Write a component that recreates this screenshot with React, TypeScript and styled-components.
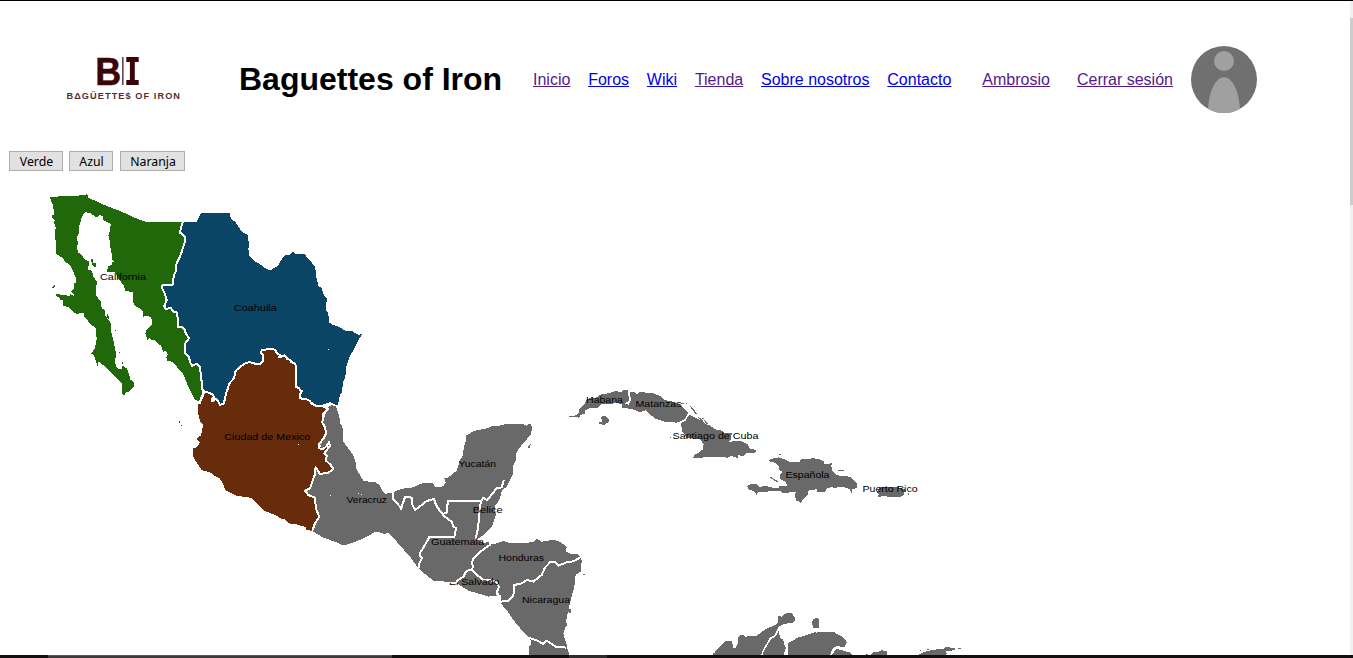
import React from 'react';
import styled, { createGlobalStyle } from 'styled-components';

const GlobalStyle = createGlobalStyle`
  * { box-sizing: border-box; }
  body { margin: 0; background: #fff; font-family: 'Liberation Sans', Arial, sans-serif; color: #000; overflow: hidden; }
`;

const Screen = styled.div`
  display: flex;
  flex-direction: column;
  width: 1353px;
  height: 658px;
  border-top: 1px solid #000;
  overflow: hidden;
`;

const Viewport = styled.div`
  display: flex;
  flex: 1;
  min-height: 0;
`;

const Page = styled.main`
  flex: 1;
  min-width: 0;
  overflow: hidden;
`;

const ScrollTrack = styled.div`
  width: 3px;
  padding-top: 17px;
  background: #f0f0f0;
`;

const ScrollThumb = styled.div`
  height: 187px;
  background: #cdcdcd;
`;

const Header = styled.header`
  display: flex;
  align-items: center;
  height: 150px;
  padding: 7px 0 0 64px;
`;

const Logo = styled.svg`
  display: block;
  width: 120px;
  height: 60px;
  flex: none;
`;

const Title = styled.h1`
  margin: 0 32px 2px 55px;
  width: 262px;
  font-size: 32px;
  line-height: 40px;
  white-space: nowrap;
`;

const Nav = styled.nav`
  display: flex;
  font-size: 16px;
  line-height: 20px;
`;

const NavLink = styled.a<{ $visited?: boolean; $gap: number }>`
  margin-right: ${(p) => p.$gap}px;
  color: ${(p) => (p.$visited ? '#551a8b' : '#0000ee')};
  text-decoration: underline;
  white-space: nowrap;
`;

const Avatar = styled.svg`
  display: block;
  width: 66px;
  height: 67px;
  flex: none;
`;

const Toolbar = styled.div`
  display: flex;
  height: 34px;
  padding-left: 9px;
`;

const ColorButton = styled.button<{ $width: number; $gap: number }>`
  width: ${(p) => p.$width}px;
  height: 20px;
  margin: 0 ${(p) => p.$gap}px 0 0;
  padding: 1px 0 0 1px;
  border: 1px solid #adadad;
  border-radius: 0;
  background: #e1e1e1;
  color: #000;
  font: 12.3px/17px 'Noto Sans', sans-serif;
`;

const Map = styled.svg`
  display: block;
  width: 1350px;
  height: 470px;
`;

const Label = styled.text`
  font: 9.6px 'Liberation Sans', Arial, sans-serif;
  fill: #000;
`;

const Taskbar = styled.div`
  display: flex;
  height: 3px;
  background: #110f10;
`;

const Task = styled.div<{ $width: number; $offset: number; $active?: boolean }>`
  width: ${(p) => p.$width}px;
  margin-left: ${(p) => p.$offset}px;
  background: ${(p) => (p.$active ? '#3d3a3b' : '#2d2b2c')};
  border-top: ${(p) => (p.$active ? '1px solid #5a5859' : '0')};
`;

const links = [
  { text: 'Inicio', visited: true, gap: 17.8 },
  { text: 'Foros', gap: 17.8 },
  { text: 'Wiki', gap: 17.8 },
  { text: 'Tienda', visited: true, gap: 17.8 },
  { text: 'Sobre nosotros', gap: 17.8 },
  { text: 'Contacto', gap: 31 },
  { text: 'Ambrosio', visited: true, gap: 27 },
  { text: 'Cerrar sesión', visited: true, gap: 18 },
];

const labels: [string, number, number, number][] = [
  ['California', 100, 280, 46],
  ['Coahuila', 233.8, 311, 43],
  ['Ciudad de Mexico', 224.3, 440, 86],
  ['Veracruz', 346.5, 503, 40.5],
  ['Yucatán', 458.5, 467, 37.5],
  ['Belice', 472.7, 513, 30],
  ['Guatemala', 431, 545, 53],
  ['Honduras', 498.5, 561, 45.5],
  ['Nicaragua', 522, 603, 48],
  ['Habana', 586, 403, 37],
  ['Matanzas', 635.5, 407, 46],
  ['Santiago de Cuba', 672.5, 439, 86],
  ['Española', 785.5, 478, 44],
  ['Puerto Rico', 862.5, 492, 55],
];

const GREEN = '#21680b';
const BLUE = '#0b4566';
const BROWN = '#662c0c';
const GRAY = '#696969';

// Region outlines are drawn at three units per pixel, relative to each sheet's origin.
const sheet = (x: number, y: number) => `translate(${x} ${y}) scale(.333333)`;

const Regions = () => (
  <g shapeRendering="crispEdges">
    <g transform={sheet(300, 400)} fill={GRAY}>
      <path d="M82 22L97 15 107 18 115 40 120 58 119 70 127 78 130 108 130 125 143 143 160 165 168 190 168 205 180 225 190 242 205 245 228 247 240 257 248 273 257 281 280 278 295 270 315 265 340 262 360 252 375 249 400 250 406 262 430 259 437 247 433 235 445 232 470 212 475 198 480 178 487 173 492 140 498 122 499 106 515 97 525 92 560 85 575 79 598 77 620 71 665 71 680 77 690 70 696 80 693 105 680 118 665 135 650 155 648 180 638 200 640 220 630 240 620 262 612 264 605 275 597 302 585 318 587 345 577 378 556 401 540 412 528 418 554 430 565 424 568 434 590 430 610 423 630 430 698 427 710 416 725 425 745 422 760 419 780 425 800 440 798 454 815 463 835 463 840 470 845 480 843 515 827 524 823 560 815 590 807 620 798 665 803 675 797 680 790 700 792 711 800 733 802 747 810 769 685 769 688 740 695 732 690 716 665 690 640 660 620 630 597 605 600 590 580 588 565 590 540 582 505 572 480 556 466 546 450 546 400 542 360 510 355 505 330 470 290 425 265 400 250 401 235 395 218 398 213 404 185 418 155 429 140 434 123 434 110 427 70 413 45 398 30 390 48 360 40 310 16 280 30 266 46 203 70 218 95 208 75 170 60 145 75 120 68 70Z" />
      <path d="M682 142L692 133 688 145ZM552 430h14v4h-14zM801 628h12v12h-5zM850 522h5v4h-5z" />
    </g>

    <g transform={sheet(30, 185)}>
      <path fill={GREEN} d="M60 36L84 36 87 33 168 31 168 27 174 30 174 38 188 44 210 54 232 64 260 74 295 89 325 103 345 110 460 110 453 125 448 140 452 148 464 153 463 168 455 195 450 215 440 232 437 260 430 275 430 299 396 299 396 312 405 325 410 345 403 362 405 370 420 368 425 375 438 380 442 395 442 425 460 432 468 450 476 460 465 475 465 500 478 512 480 535 490 543 507 537 513 550 513 580 520 615 510 640 508 649 495 644 475 605 460 568 440 545 425 530 413 528 408 517 414 509 406 497 400 501 393 482 381 474 373 463 363 466 360 458 352 465 346 446 350 435 367 419 367 405 360 395 348 392 340 396 337 375 315 362 310 352 310 322 287 318 280 300 265 280 255 262 232 262 233 243 247 240 247 232 251 230 247 225 245 205 240 180 238 160 235 150 239 140 239 129 245 117 232 112 220 105 219 95 210 90 204 95 195 95 191 89 185 89 183 83 170 83 168 81 159 90 155 98 152 110 147 125 147 143 142 155 143 180 140 185 145 203 156 210 160 219 166 225 176 228 176 240 174 254 186 257 190 275 200 290 198 330 212 350 215 370 225 375 225 390 234 403 240 408 243 420 243 440 250 465 255 490 258 503 255 535 262 550 274 552 279 540 282 546 290 550 298 570 300 583 312 592 312 605 300 618 287 623 283 630 277 628 277 598 250 570 230 550 210 532 203 531 203 543 198 531 195 520 190 508 182 508 195 490 200 462 197 430 180 415 163 395 163 383 140 387 128 380 115 365 100 364 100 347 90 345 88 337 78 333 78 327 113 332 120 334 120 325 129 332 136 331 123 321 132 310 133 295 139 292 137 278 128 255 120 240 105 230 100 220 79 207 79 180 75 155 75 135 78 130 74 119 71 113 74 106 66 98 66 92 72 88 73 75 67 70 70 60 63 48Z" />
      <path fill={GREEN} d="M183 223H190V233H198V247L187 241ZM65 307L75 300V306L69 310ZM231 388L235 386 238 403 233 402ZM255 435h3v3h-3zM267 501h3v3h-3zM276 532h3v4h-3z" />
    </g>
    <path fill="#fff" d="M130 308h3v1h-3zM108 315h2v1h-2z" />

    <g transform={sheet(150, 200)}>
      <path fill={BLUE} d="M100 67L140 66 147 50 153 39 240 39 242 55 255 65 261 74 270 87 279 98 293 105 294 120 299 132 295 145 297 165 305 175 315 185 325 189 350 208 365 210 370 205 385 197 392 182 404 167 420 164 425 157 433 157 435 163 465 162 471 173 483 183 490 196 496 202 498 232 502 238 503 255 515 265 523 289 530 296 528 333 535 340 537 368 550 375 562 379 573 384 585 392 605 392 625 405 638 402 628 415 615 442 600 468 594 485 589 500 586 530 578 550 577 578 570 582 566 605 562 617 545 612 527 618 505 620 485 605 450 595 455 575 437 560 437 490 410 470 385 470 375 455 360 447 337 450 338 480 330 490 295 487 260 512 250 540 235 560 225 600 215 614 200 600 190 590 180 580 160 570 155 535 150 500 140 492 120 495 115 475 104 455 107 430 115 415 105 400 98 383 83 380 80 350 65 327 47 322 50 300 43 280 37 256 68 256 72 225 80 190 95 150 105 120 103 107 90 97 95 85Z" />
    </g>
    <g transform={sheet(170, 330)}>
      <path fill={BROWN} d="M97 190L110 187 130 197 125 213 135 207 150 223 160 222 168 190 178 160 192 145 200 120 235 97 272 101 278 90 275 60 300 57 315 62 325 80 345 78 360 95 378 102 377 172 393 175 388 205 420 213 440 228 472 230 470 240 457 262 457 278 465 292 470 310 460 325 448 345 453 355 460 352 475 340 478 347 463 370 470 378 468 392 490 417 475 428 450 432 437 412 432 440 425 460 420 475 405 482 415 495 436 503 437 535 448 560 435 580 423 602 410 600 406 590 395 588 380 583 355 580 345 568 333 566 320 557 285 543 270 530 245 503 230 502 200 497 165 480 161 465 150 446 130 435 122 428 95 420 75 390 68 375 68 355 80 352 91 337 81 328 84 321 93 318 97 298 100 284 90 275 84 247 84 222 92 222Z" />
      <path fill={BROWN} d="M26 273h4v6h-4zM33 285h3v3h-3z" />
      <path fill={GRAY} d="M450 340L457 325 471 328 476 337 463 344 456 354Z" />
      <g fill="none" stroke="#fff" strokeWidth="6" strokeLinejoin="round">
        <path d="M97 190L110 186 127 193 133 201 125 207 127 214 137 207 145 215 150 224 160 222 165 207 168 190 173 178 178 160 192 145 197 122 212 110 222 102 235 97 252 98 255 102 272 101 278 94 278 75 273 70 275 60 300 57 315 59 320 68 329 75 328 82 343 76 351 86 360 90 364 97 375 101 378 110 377 172 388 173 389 181 396 183 390 193 390 205 407 207 420 213 424 220 440 228 455 228 468 224 480 220 495 226" />
        <path d="M455 228L474 236 470 240 460 250 457 278 465 292 469 310 460 325 447 343 448 355 460 357 470 348 477 337 480 347 463 370 470 378 468 392 482 405 490 417 475 428 450 432 437 412 434 435 425 460 420 475 405 482 415 495 436 503 437 535 448 560 435 580 427 602" />
      </g>
    </g>
    <g transform={sheet(150, 200)} fill="none" stroke="#fff" strokeWidth="6" strokeLinejoin="round">
      <path d="M99 65L94 80 90 98 103 107 106 120 99 143 93 162 85 180 80 188 77 215 71 228 69 254 37 256 37 266 44 280 50 300 43 318 47 326 63 325 69 334 80 337 83 355 83 380 97 382 105 390 107 400 117 415 106 430 104 457 117 470 120 487 126 497 140 492 150 500 153 530 155 545 157 570 161 570 158 590 150 604" />
    </g>
    <path fill="#fff" d="M328 349h1v1h-1zM298 444h1v1h-1zM330 495h1v1h-1zM358 493h1v1h-1zM361 494h1v1h-1z" />

    <g transform={sheet(300, 400)} fill="none" stroke="#fff" strokeWidth="6" strokeLinejoin="round">
      <path d="M279 277L280 297 300 320 303 327 308 311 315 292 328 290 336 295 335 310 345 330 365 315 380 303 402 297 408 315 420 333 430 341 440 338 440 325 445 303 543 303 550 293 560 300 570 290 580 278 590 265 605 262 612 239" />
      <path d="M423 335L432 348 455 365 460 379 468 385 463 410 388 411 372 440 360 458 360 467 366 475 358 490 355 507" />
      <path d="M543 303L537 340 535 380 527 418" />
      <path d="M572 433L545 452 520 475 515 490 520 500 513 510 500 512 490 530 472 542 465 552" />
      <path d="M515 508L530 524 550 540 580 542 590 548 597 560 590 578 600 590 600 605 625 603 640 588 643 555 665 550 680 540 700 545 725 525 735 503 750 487 765 487 775 497 800 487 820 484 840 473" />
      <path d="M688 714L710 721 730 732 740 722 770 742 785 740 798 743" />
      <path d="M590 575L595 590 604 590" strokeWidth="8" />
    </g>

    <g transform={sheet(560, 380)} fill={GRAY}>
      <path d="M27 107L43 108 57 99 58 87 67 77 76 70 78 60 96 51 106 55 121 44 150 39 165 34 185 35 190 31 205 31 206 63 192 70 212 76 206 80 190 82 184 79 186 73 166 67 154 73 124 73 111 85 92 83 75 92 74 101 61 105 58 113 45 111 27 110Z" />
      <path d="M211 35L225 37 230 43 242 35 262 39 280 40 296 46 309 54 313 60 340 65 363 78 384 98 376 116 365 123 350 128 313 125 285 115 266 100 258 91 240 97 219 88 186 83 188 77 204 78 212 62Z" />
      <path d="M387 104L401 111 420 120 425 118 436 131 450 137 456 141 469 149 482 150 496 160 515 158 514 174 508 185 542 183 563 193 571 207 590 210 584 220 558 220 550 228 535 226 532 235 515 227 503 233 480 230 400 234 401 226 420 215 429 208 431 192 420 178 379 173 374 162 367 157 365 145 363 129 378 121Z" />
      <path d="M124 110L135 107 145 115 147 125 139 130 135 135 117 132 118 127 129 124 124 117ZM364 69h7v3h-7zM377 69h4v3h-4zM390 78L399 84 411 101 408 104 394 86ZM413 110L425 117 421 119ZM426 114h5v3h-5zM433 120L445 133 436 129ZM330 171h3v3h-3zM627 240L645 233 666 233 666 255 650 247 640 246Z" />
    </g>
    <g transform={sheet(730, 440)} fill={GRAY}>
      <path d="M117 62L130 56 139 60 145 52 163 58 180 66 210 65 212 57 253 55 268 58 281 63 283 71 301 72 306 83 305 90 318 104 330 108 360 110 370 120 382 132 381 144 367 148 364 160 360 148 350 144 334 140 315 144 304 141 291 145 285 156 261 155 260 148 236 150 233 165 223 173 212 190 207 183 200 183 194 165 197 157 157 158 150 153 105 155 84 155 80 166 76 157 65 151 53 147 52 137 65 132 82 133 89 141 108 137 118 142 145 144 150 137 172 137 164 123 152 120 149 105 157 95 149 90 145 77 134 68 120 66Z" />
      <path d="M301 68h4v6h-4zM148 42h6v3h-6zM121 110L132 117 144 124 140 126 121 114ZM325 89h17v3h-17zM447 142L485 140 510 143 529 150 523 158 520 167 507 171 480 171 460 168 443 172 446 162 442 157ZM534 160h4v4h-4z" />
    </g>
    <g transform={sheet(690, 600)} fill={GRAY}>
      <path d="M69 167L70 160 75 157 80 148 92 139 105 124 115 124 117 122 126 124 131 145 136 145 144 130 145 113 151 104 160 105 164 110 200 108 218 93 235 84 262 72 265 62 265 47 271 47 275 51 285 42 294 38 308 41 311 49 317 57 311 67 295 70 280 73 266 81 252 107 240 113 220 147 212 167Z" />
      <path d="M217 167L223 150 243 118 258 108 266 92 270 112 280 120 283 135 288 142 280 167ZM294 167V130L325 112 345 107 369 99 376 94 378 98 390 95 431 96 455 109 467 122 470 128 464 142 450 140 442 137 426 147 420 167ZM427 162L440 147 456 150 463 154 475 155 487 162 487 167H427ZM366 68L370 57 381 53 388 61 388 83 370 83ZM541 164L551 156 565 156 575 151 590 154V164ZM687 163L705 155 732 149 760 147 764 142 796 143 794 150 765 155 771 162 762 167H687ZM804 144h8v3h-8zM528 162h6v4h-6zM689 150h4v3h-4zM711 147h6v3h-6z" />
    </g>
  </g>
);

const BrandMark = () => (
  <Logo viewBox="64 50 120 60" fill="#3b0508">
    <text x="95.2" y="84.7" fontFamily="Liberation Sans" fontWeight="700" fontSize="39.5" textLength="26" lengthAdjust="spacingAndGlyphs" stroke="#3b0508" strokeWidth=".5">B</text>
    <rect x="122" y="57" width="1.6" height="28" opacity=".75" />
    <path d="M126.3 57h12.4v5h-3.9v18h3.9v5h-12.4v-5h3.6V62h-3.6z" />
    <text x="66.5" y="99" fontFamily="Liberation Sans" fontWeight="700" fontSize="9.2" textLength="113.5" opacity=".85">BΔGÜETTE$ OF IRON</text>
  </Logo>
);

export default function App() {
  return (
    <Screen>
      <GlobalStyle />
      <Viewport>
        <Page>
          <Header>
            <BrandMark />
            <Title>Baguettes of Iron</Title>
            <Nav>
              {links.map((l) => (
                <NavLink key={l.text} $visited={l.visited} $gap={l.gap}>{l.text}</NavLink>
              ))}
            </Nav>
            <Avatar viewBox="0 0 66 67">
              <clipPath id="disc"><ellipse cx="33" cy="33.5" rx="33" ry="33.5" /></clipPath>
              <g clipPath="url(#disc)">
                <rect width="66" height="67" fill="#707070" />
                <circle cx="33" cy="15" r="10" fill="#a0a0a0" />
                <ellipse cx="33" cy="67" rx="16" ry="36" fill="#a0a0a0" />
              </g>
            </Avatar>
          </Header>
          <Toolbar>
            <ColorButton $width={54} $gap={6}>Verde</ColorButton>
            <ColorButton $width={44} $gap={7}>Azul</ColorButton>
            <ColorButton $width={65} $gap={0}>Naranja</ColorButton>
          </Toolbar>
          <Map viewBox="0 185 1350 470">
            <Regions />
            {labels.map(([text, x, y, width]) => (
              <Label key={text} x={x} y={y} textLength={width} lengthAdjust="spacingAndGlyphs">{text}</Label>
            ))}
            <clipPath id="salvador"><path d="M449 583h11v-8h39v12h-50z" /></clipPath>
            <Label x="449" y="585" textLength="54" lengthAdjust="spacingAndGlyphs" clipPath="url(#salvador)">El Salvador</Label>
          </Map>
        </Page>
        <ScrollTrack><ScrollThumb /></ScrollTrack>
      </Viewport>
      <Taskbar>
        <Task $offset={48} $width={344} $active />
        <Task $offset={177} $width={38} />
      </Taskbar>
    </Screen>
  );
}
